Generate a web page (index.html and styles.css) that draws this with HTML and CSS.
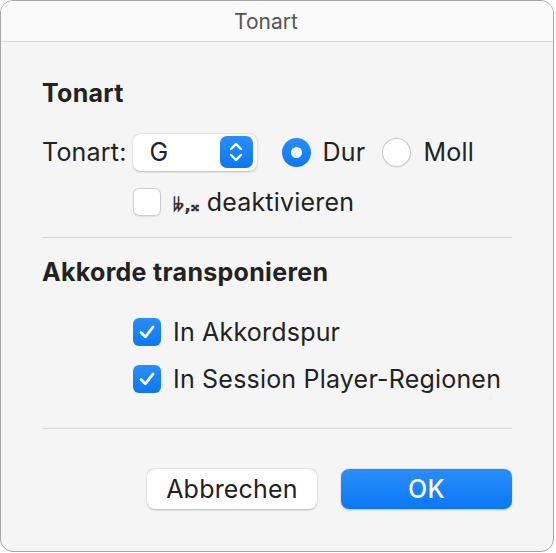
FILE: index.html
```html
<!DOCTYPE html>
<html lang="de">
<head>
  <meta charset="UTF-8">
  <meta name="viewport" content="width=device-width, initial-scale=1.0">
  <title>Tonart</title>
  <link rel="stylesheet" href="styles.css">
</head>
<body>
  <div class="window">
    <div class="titlebar"><span class="title">Tonart</span></div>

    <div class="content">
      <h2 class="section-title">Tonart</h2>

      <div class="key-row">
        <span class="label">Tonart:</span>
        <div class="popup">
          <span class="popup-value">G</span>
          <span class="stepper">
            <svg width="16" height="22" viewBox="0 0 16 22">
              <path d="M3 8 L8 3 L13 8" fill="none" stroke="#fff" stroke-width="2.4" stroke-linecap="round" stroke-linejoin="round"/>
              <path d="M3 14 L8 19 L13 14" fill="none" stroke="#fff" stroke-width="2.4" stroke-linecap="round" stroke-linejoin="round"/>
            </svg>
          </span>
        </div>
        <label class="radio-item">
          <span class="radio checked"></span>
          <span>Dur</span>
        </label>
        <label class="radio-item">
          <span class="radio"></span>
          <span>Moll</span>
        </label>
      </div>

      <div class="check-row indent">
        <span class="checkbox"></span>
        <span><span class="music">&#x1D12B;,&#x1D12A;</span> deaktivieren</span>
      </div>

      <hr class="separator sep-first">

      <h2 class="section-title">Akkorde transponieren</h2>

      <div class="check-list">
        <div class="check-row indent">
          <span class="checkbox checked">
            <svg width="20" height="20" viewBox="0 0 20 20">
              <path d="M4 10.5 L8.3 14.8 L16 5" fill="none" stroke="#fff" stroke-width="2.8" stroke-linecap="round" stroke-linejoin="round"/>
            </svg>
          </span>
          <span>In Akkordspur</span>
        </div>
        <div class="check-row indent">
          <span class="checkbox checked">
            <svg width="20" height="20" viewBox="0 0 20 20">
              <path d="M4 10.5 L8.3 14.8 L16 5" fill="none" stroke="#fff" stroke-width="2.8" stroke-linecap="round" stroke-linejoin="round"/>
            </svg>
          </span>
          <span>In Session Player-Regionen</span>
        </div>
      </div>

      <hr class="separator sep-second">

      <div class="buttons">
        <button class="btn">Abbrechen</button>
        <button class="btn btn-primary">OK</button>
      </div>
    </div>
  </div>
</body>
</html>
```

FILE: styles.css
```css
* {
  margin: 0;
  padding: 0;
  box-sizing: border-box;
  font-family: Inter, "Liberation Sans", sans-serif;
}

body {
  background-color: #fff;
  color: #222;
  width: 556px;
  height: 553px;
}

.window {
  width: 554px;
  height: 552px;
  border: 1px solid #a6a6a6;
  border-radius: 13px;
  overflow: hidden;
  background: #f5f5f5;
}

.titlebar {
  height: 41px;
  background: #fafafa;
  border-bottom: 1px solid #d9d9d9;
  color: #555;
  font-size: 21px;
  display: flex;
  align-items: center;
  justify-content: center;
  padding-right: 22px;
}

.content {
  padding: 0 41px 0 41px;
  font-size: 25px;
  letter-spacing: 0.2px;
}

.section-title {
  font-size: 25px;
  font-weight: 700;
  line-height: 28px;
  letter-spacing: 0.3px;
  color: #222;
}

.content > .section-title:first-child {
  margin-top: 37px;
}

.key-row {
  display: flex;
  align-items: center;
  margin-top: 25px;
  height: 40px;
}

.label {
  margin-right: 6px;
}

.popup {
  width: 124px;
  height: 37px;
  background: #fff;
  border-radius: 8px;
  box-shadow: 0 0.5px 2px rgba(0, 0, 0, 0.25);
  display: flex;
  align-items: center;
  justify-content: space-between;
  padding: 0 4px 0 17px;
  margin-right: 25px;
}

.stepper {
  width: 33px;
  height: 32px;
  border-radius: 7px;
  background: linear-gradient(#2a8efa, #0a78f5);
  display: flex;
  align-items: center;
  justify-content: center;
}

.radio-item {
  display: flex;
  align-items: center;
  gap: 12px;
  margin-right: 17px;
}

.radio {
  width: 29px;
  height: 29px;
  border-radius: 50%;
  background: #fff;
  box-shadow: inset 0 0 0 1px #c8c8c8, 0 0.5px 1px rgba(0, 0, 0, 0.1);
  display: flex;
  align-items: center;
  justify-content: center;
}

.radio.checked {
  background: linear-gradient(#2a8efa, #0a78f5);
  box-shadow: none;
}

.radio.checked::after {
  content: "";
  width: 11px;
  height: 11px;
  border-radius: 50%;
  background: #fff;
}

.check-row {
  display: flex;
  align-items: center;
  gap: 12px;
  height: 28px;
}

.indent {
  margin-left: 91px;
}

.key-row + .check-row {
  margin-top: 16px;
}

.checkbox {
  width: 28px;
  height: 28px;
  border-radius: 6px;
  background: #fff;
  box-shadow: inset 0 0 0 1px #cfcfcf, 0 0.5px 1px rgba(0, 0, 0, 0.08);
  display: flex;
  align-items: center;
  justify-content: center;
}

.checkbox.checked {
  background: linear-gradient(#2a8efa, #0a78f5);
  box-shadow: none;
}

.music {
  font-family: "DejaVu Sans", sans-serif;
  font-size: 18px;
  font-weight: 700;
  color: #333;
}

.separator {
  border: none;
  border-top: 1px solid #d8d8d8;
}

.sep-first {
  margin-top: 21px;
  margin-bottom: 20px;
}

.check-list {
  display: flex;
  flex-direction: column;
  gap: 19px;
  margin-top: 32px;
}

.sep-second {
  margin-top: 35px;
}

.buttons {
  display: flex;
  justify-content: flex-end;
  gap: 24px;
  margin-top: 40px;
}

.btn {
  width: 170px;
  height: 40px;
  border: none;
  border-radius: 8px;
  background: #fff;
  color: #222;
  font-size: 25px;
  letter-spacing: 0.2px;
  box-shadow: 0 0.5px 2px rgba(0, 0, 0, 0.25);
}

.btn-primary {
  width: 171px;
  background: linear-gradient(#2a8efa, #0a78f5);
  color: #fff;
  font-weight: 500;
}
```
